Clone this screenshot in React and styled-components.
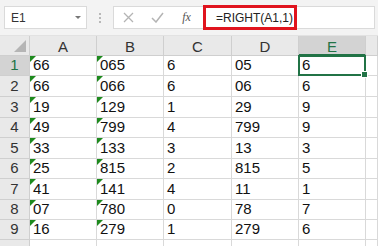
import React from "react";
import styled, { createGlobalStyle } from "styled-components";

const GlobalStyle = createGlobalStyle`
  html, body {
    margin: 0;
    padding: 0;
    background: #ffffff;
    overflow: hidden;
  }
  body {
    font-family: "Liberation Sans", Arial, sans-serif;
  }
`;

const Window = styled.div`
  width: 378px;
  height: 246px;
  overflow: hidden;
  background: #ffffff;
`;

const Toolbar = styled.div`
  height: 36px;
  box-sizing: border-box;
  background: #f3f3f3;
  display: flex;
  align-items: flex-start;
  padding: 6px 3px 0 4px;
  border-bottom: 1px solid #e2e2e2;
`;

const NameBox = styled.div`
  width: 83px;
  height: 23px;
  box-sizing: border-box;
  background: #fff;
  border: 1px solid #dadada;
  display: flex;
  align-items: center;
  justify-content: space-between;
  padding: 0 5px 0 6px;
  font-size: 12px;
  color: #333;
`;

const Caret = styled.span`
  width: 0;
  height: 0;
  border-left: 3px solid transparent;
  border-right: 3px solid transparent;
  border-top: 3px solid #777;
`;

const Grip = styled.div`
  width: 26px;
  height: 23px;
  display: flex;
  flex-direction: column;
  align-items: center;
  justify-content: center;
  gap: 2px;
  & > span {
    width: 2px;
    height: 2px;
    background: #b8b8b8;
  }
`;

const FormulaBar = styled.div`
  flex: 1;
  height: 23px;
  box-sizing: border-box;
  background: #fff;
  border: 1px solid #dadada;
  display: flex;
  align-items: center;
  position: relative;
`;

const BarButton = styled.span`
  width: 29px;
  display: flex;
  justify-content: center;
  align-items: center;
  color: #b0b0b0;
`;

const Fx = styled.span`
  width: 29px;
  text-align: center;
  font-family: "Liberation Serif", "Times New Roman", serif;
  font-style: italic;
  font-size: 12px;
  color: #555;
`;

const Highlight = styled.span`
  margin-left: 2px;
  height: 25px;
  box-sizing: border-box;
  width: 94px;
  border: 3px solid #e0141e;
  display: flex;
  align-items: center;
  padding-left: 10px;
  font-size: 12px;
  color: #222;
`;

const Sheet = styled.div`
  display: grid;
  grid-template-columns: 30px 67px 67px 68px 67px 67px 1fr;
  grid-template-rows: 20px 20px 21px 21px 20px 21px 20px 21px 20px 20px 20px;
`;

const Corner = styled.div`
  background: #e9e9e9;
  border-right: 1px solid #cfcfcf;
  border-bottom: 1px solid #cfcfcf;
  position: relative;
  &::after {
    content: "";
    position: absolute;
    right: 3px;
    bottom: 3px;
    width: 0;
    height: 0;
    border-left: 12px solid transparent;
    border-bottom: 12px solid #b5b5b5;
  }
`;

const ColHead = styled.div`
  background: ${(p) => (p.$active ? "#d3d3d3" : "#e9e9e9")};
  border-right: 1px solid #cfcfcf;
  border-bottom: ${(p) => (p.$active ? "2px solid #217346" : "1px solid #cfcfcf")};
  box-sizing: border-box;
  display: flex;
  align-items: center;
  justify-content: center;
  font-size: 15px;
  color: ${(p) => (p.$active ? "#217346" : "#333")};
  padding-top: 2px;
`;

const RowHead = styled.div`
  background: ${(p) => (p.$active ? "#d3d3d3" : "#e9e9e9")};
  border-right: 1px solid #cfcfcf;
  border-bottom: 1px solid #cfcfcf;
  box-sizing: border-box;
  display: flex;
  align-items: flex-end;
  justify-content: center;
  padding-bottom: 1px;
  font-size: 15px;
  line-height: 18px;
  color: ${(p) => (p.$active ? "#217346" : "#333")};
`;

const Cell = styled.div`
  position: relative;
  border-right: 1px solid #d9d9d9;
  border-bottom: 1px solid #d9d9d9;
  box-sizing: border-box;
  display: flex;
  align-items: flex-end;
  padding: 0 0 1px 3px;
  font-size: 15px;
  line-height: 18px;
  color: #111;
  ${(p) =>
    p.$text &&
    `&::before {
      content: "";
      position: absolute;
      left: 0;
      top: 0;
      border-top: 6px solid #1e8a1e;
      border-right: 6px solid transparent;
    }`}
  ${(p) =>
    p.$selected &&
    `&::after {
      content: "";
      position: absolute;
      left: -1px;
      top: -1px;
      right: -1px;
      bottom: -1px;
      border: 2px solid #217346;
    }`}
`;

const Handle = styled.span`
  position: absolute;
  right: -3px;
  bottom: -3px;
  width: 5px;
  height: 5px;
  background: #217346;
  border: 1px solid #fff;
  z-index: 2;
`;

const rows = [
  ["66", "065", "6", "05", "6"],
  ["66", "066", "6", "06", "6"],
  ["19", "129", "1", "29", "9"],
  ["49", "799", "4", "799", "9"],
  ["33", "133", "3", "13", "3"],
  ["25", "815", "2", "815", "5"],
  ["41", "141", "4", "11", "1"],
  ["07", "780", "0", "78", "7"],
  ["16", "279", "1", "279", "6"],
  ["", "", "", "", ""],
];

const cols = ["A", "B", "C", "D", "E", ""];

export default function App() {
  return (
    <Window>
      <GlobalStyle />
      <Toolbar>
        <NameBox>
          E1
          <Caret />
        </NameBox>
        <Grip>
          <span />
          <span />
          <span />
        </Grip>
        <FormulaBar>
          <BarButton>
            <svg width="11" height="11" viewBox="0 0 11 11">
              <path d="M1 1L10 10M10 1L1 10" stroke="#b4b4b4" strokeWidth="1.3" />
            </svg>
          </BarButton>
          <BarButton>
            <svg width="13" height="11" viewBox="0 0 13 11">
              <path d="M1 6L5 10L12 1" stroke="#b4b4b4" strokeWidth="1.5" fill="none" />
            </svg>
          </BarButton>
          <Fx>fx</Fx>
          <Highlight>=RIGHT(A1,1)</Highlight>
        </FormulaBar>
      </Toolbar>
      <Sheet>
        <Corner />
        {cols.map((c, i) => (
          <ColHead key={i} $active={c === "E"}>
            {c}
          </ColHead>
        ))}
        {rows.map((r, ri) => (
          <React.Fragment key={ri}>
            <RowHead $active={ri === 0}>{ri < 9 ? ri + 1 : ""}</RowHead>
            {r.map((v, ci) => (
              <Cell
                key={ci}
                $text={ri < 9 && ci < 2}
                $selected={ri === 0 && ci === 4}
              >
                {v}
                {ri === 0 && ci === 4 && <Handle />}
              </Cell>
            ))}
            <Cell />
          </React.Fragment>
        ))}
      </Sheet>
    </Window>
  );
}
